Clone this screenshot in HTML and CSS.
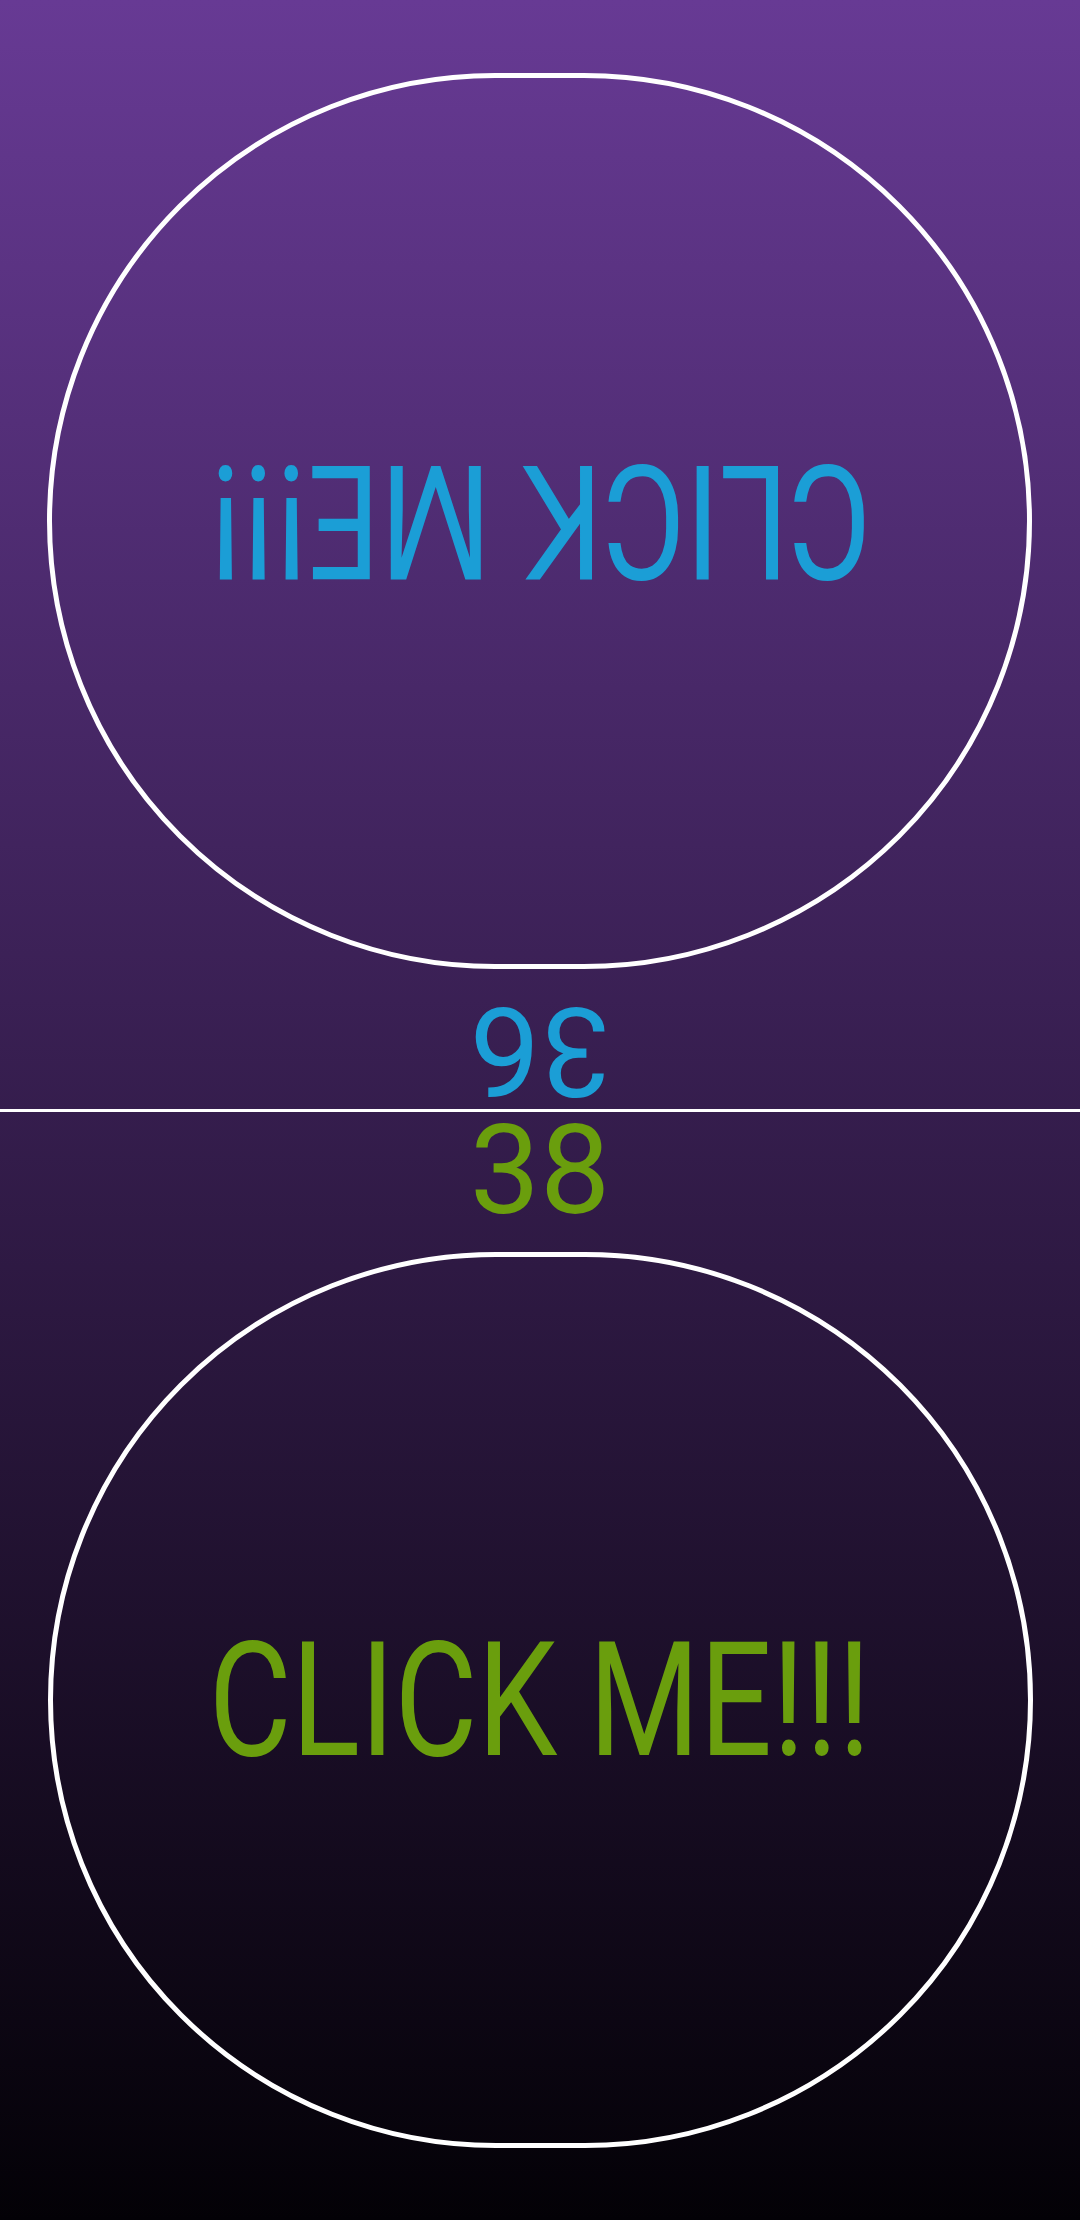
FILE: index.html
```html
<!DOCTYPE html>
<html lang="en">
<head>
<meta charset="utf-8">
<title>Click Me Duel</title>
<link rel="stylesheet" href="styles.css">
</head>
<body>
<main class="app">
  <section class="player player-top">
    <div class="score score-blue">36</div>
    <div class="pad"><span class="label label-blue">CLICK ME!!!</span></div>
  </section>
  <div class="divider"></div>
  <section class="player player-bottom">
    <div class="score score-green">38</div>
    <div class="pad"><span class="label label-green">CLICK ME!!!</span></div>
  </section>
</main>
</body>
</html>
```
FILE: styles.css
```css
html, body {
  margin: 0;
  padding: 0;
}
body {
  width: 1080px;
  height: 2220px;
  overflow: hidden;
  font-family: Roboto, "Noto Sans", sans-serif;
}
.app {
  width: 1080px;
  height: 2220px;
  display: flex;
  flex-direction: column;
  background: linear-gradient(to bottom, #673a94 0%, #351d4d 50%, #030106 100%);
}
.player {
  height: 1109px;
  display: flex;
  flex-direction: column;
  align-items: center;
}
.player-top {
  transform: rotate(180deg);
}
.player-bottom {
  height: 1108px;
}
.divider {
  height: 3px;
  background: #ffffff;
  flex: none;
}
.score {
  height: 118px;
  font-size: 125px;
  line-height: 118px;
  font-weight: 400;
  margin-bottom: 22px;
  text-align: center;
}
.score-blue { color: #1b9ed6; }
.score-green { color: #6a9e0d; }
.pad {
  box-sizing: border-box;
  width: 985px;
  height: 896px;
  border: 5px solid #ffffff;
  border-radius: 9999px;
  display: flex;
  align-items: center;
  justify-content: center;
}
.label {
  display: inline-block;
  font-size: 159px;
  line-height: 1;
  font-weight: 400;
  white-space: nowrap;
  transform: scaleX(0.8);
}
.label-blue { color: #1b9ed6; }
.label-green { color: #6a9e0d; }
```
